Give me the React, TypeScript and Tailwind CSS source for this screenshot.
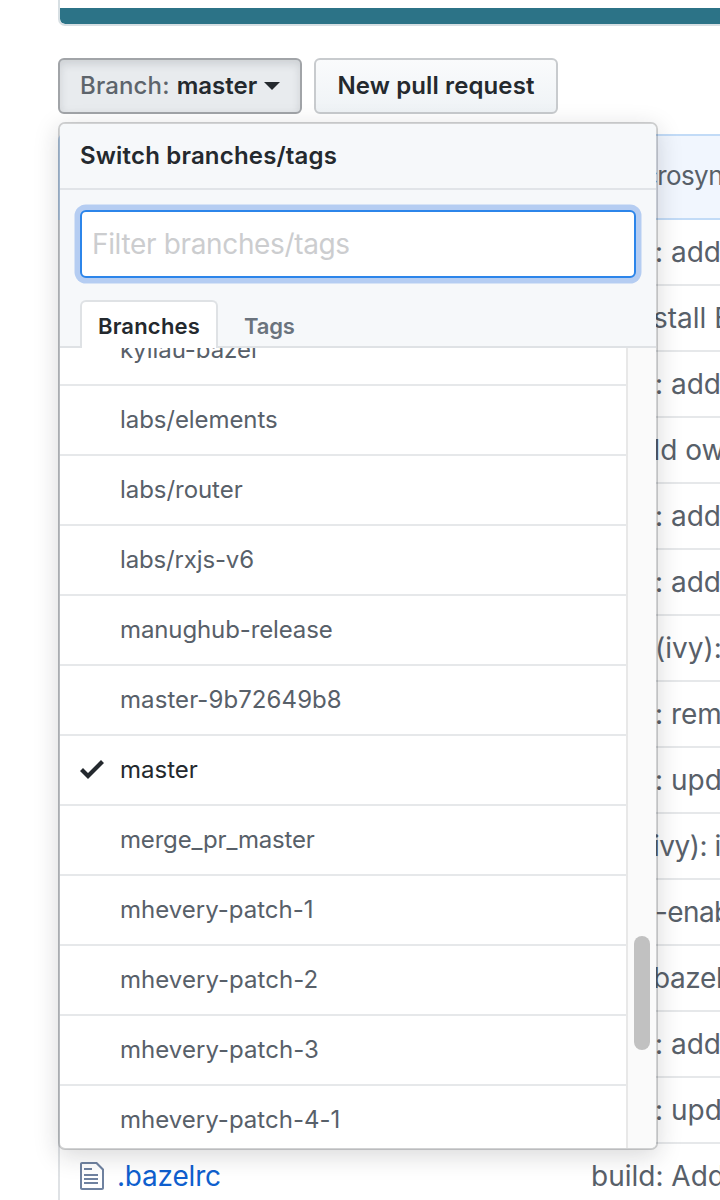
import React from "react";

const branches = [
  { name: "kyliau-bazel", tracking: "tracking-[-0.05px]" },
  { name: "labs/elements", tracking: "tracking-[-0.08px]" },
  { name: "labs/router", tracking: "tracking-[-0.05px]" },
  { name: "labs/rxjs-v6", tracking: "tracking-[-0.15px]" },
  { name: "manughub-release", tracking: "tracking-[-0.12px]" },
  { name: "master-9b72649b8", tracking: "tracking-[0.08px]" },
  { name: "master", tracking: "tracking-normal", selected: true },
  { name: "merge_pr_master", tracking: "tracking-[-0.18px]" },
  { name: "mhevery-patch-1", tracking: "tracking-normal" },
  { name: "mhevery-patch-2", tracking: "tracking-[0.04px]" },
  { name: "mhevery-patch-3", tracking: "tracking-[0.04px]" },
  { name: "mhevery-patch-4-1", tracking: "tracking-[0.02px]" },
];

const commits = [
  { text: ": add", indent: "pl-[595px]" },
  { text: "stall B", indent: "pl-[593px]" },
  { text: ": add", indent: "pl-[595px]" },
  { text: "dd ow", indent: "pl-[583px]" },
  { text: ": add", indent: "pl-[595px]" },
  { text: ": add", indent: "pl-[595px]" },
  { text: "(ivy):", indent: "pl-[595px]" },
  { text: ": rem", indent: "pl-[595px]" },
  { text: ": upd", indent: "pl-[595px]" },
  { text: "ivy): i", indent: "pl-[593px] tracking-[-0.5px]" },
  { text: "-enab", indent: "pl-[595px] tracking-[-0.6px]" },
  { text: "bazel", indent: "pl-[593px] tracking-[-0.4px]" },
  { text: ": add", indent: "pl-[595px]" },
  { text: ": upd", indent: "pl-[595px]" },
];

function CheckIcon() {
  return (
    <svg viewBox="0 0 12 16" className="-mt-[3px] h-8 w-6 shrink-0 fill-[#24292e]" aria-hidden="true">
      <path fillRule="evenodd" d="M12 5l-8 8-4-4 1.5-1.5L4 10l6.5-6.5L12 5z" />
    </svg>
  );
}

function FileIcon() {
  return (
    <svg viewBox="0 0 12 16" className="h-8 w-6 shrink-0 fill-[#6f82a0]" aria-hidden="true">
      <path
        fillRule="evenodd"
        d="M6 5H2V4h4v1zM2 8h7V7H2v1zm0 2h7V9H2v1zm0 2h7v-1H2v1zm10-7.5V14c0 .55-.45 1-1 1H1c-.55 0-1-.45-1-1V2c0-.55.45-1 1-1h7.5L12 4.5zM11 5L8 2H1v12h10V5z"
      />
    </svg>
  );
}

function BranchMenu() {
  return (
    <div className="absolute top-[122px] left-[58px] z-10 flex h-[1028px] w-[600px] flex-col overflow-hidden rounded-[7px] border-2 border-[rgba(27,31,35,0.2)] bg-white bg-clip-padding shadow-[0_6px_24px_rgba(27,31,35,0.17)]">
      <div className="flex h-[66px] shrink-0 items-center border-b-2 border-[#e1e4e8] bg-[#f6f8fa] px-5 pb-px text-2xl font-semibold tracking-[0.18px] text-[#24292e]">
        Switch branches/tags
      </div>
      <div className="flex h-[158px] shrink-0 flex-col justify-between border-b-2 border-[#dfe2e5] bg-[#f6f8fa] px-5 pt-5">
        <div className="flex h-[68px] w-[556px] items-center rounded-[6px] border-2 border-[#2c85ea] bg-white pl-[10px] text-[28px] tracking-[-0.35px] text-[#cccdcf] shadow-[0_0_0_5.5px_#b5cdf2]">
          Filter branches/tags
        </div>
        <div className="-mb-0.5 flex h-12 text-[22px] font-semibold">
          <div className="flex w-[138px] items-center justify-center rounded-t-[6px] border-2 border-b-0 border-[#dfe2e5] bg-white pt-0.5 tracking-[0.2px] text-[#24292e]">
            Branches
          </div>
          <div className="flex items-center pt-1 pl-[26px] tracking-[-0.2px] text-[#6a737d]">Tags</div>
        </div>
      </div>
      <div className="flex min-h-0 flex-1">
        <div className="flex min-w-0 flex-1 flex-col justify-end overflow-hidden">
          {branches.map((b, i) => (
            <div
              key={b.name}
              className={
                "flex h-[70px] shrink-0 items-center pl-5 text-2xl " +
                (i === branches.length - 1 ? "mb-[-8px] " : "") +
                "border-b-2 border-[#e6e8ea] " +
                b.tracking +
                (b.selected ? " text-[#24292e]" : " text-[#586069]")
              }
            >
              <span className="flex w-10">{b.selected && <CheckIcon />}</span>
              <span>{b.name}</span>
            </div>
          ))}
        </div>
        <div className="flex w-[30px] shrink-0 justify-center border-l-2 border-[#e8e8e8] bg-[#fafafa] pt-[588px]">
          <div className="h-[114px] w-4 rounded-full bg-[#c1c1c1]" />
        </div>
      </div>
    </div>
  );
}

export default function App() {
  return (
    <div className="relative h-[1200px] w-[720px] overflow-hidden bg-white pl-[58px] font-['Inter','Liberation_Sans',sans-serif] whitespace-nowrap">
      <div className="h-[26px] overflow-hidden rounded-bl-[7px] border-b-2 border-l-2 border-[#d7dfe3] pt-2">
        <div className="h-4 rounded-bl-[5px] bg-[#2c7387]" />
      </div>

      <div className="mt-8 flex gap-3 text-2xl font-semibold text-[#24292e]">
        <button className="flex h-14 w-[244px] items-center rounded-[6px] border-2 border-[#a1a4a8] bg-[#e8ebee] pl-5 shadow-[inset_0_4px_8px_rgba(27,31,35,0.13)]">
          <span className="font-medium tracking-[0.15px] text-[#5d646b]">Branch:</span>
          <span className="ml-[7px]">master</span>
          <span className="ml-[7px] border-x-8 border-t-8 border-x-transparent border-t-[#24292e]" />
        </button>
        <button className="flex h-14 w-[244px] items-center justify-center rounded-[6px] border-2 border-[#c8cbce] bg-linear-to-b from-[#fafbfc] to-[#eff3f6] tracking-[0.12px]">
          New pull request
        </button>
      </div>

      <div className="mt-5 flex h-[86px] items-center rounded-tl-[6px] border-2 border-r-0 border-[#c2dbf7] bg-[#f1f6fe] pb-[3px] pl-[583px] text-[26px] tracking-[-0.6px] text-[#586069]">
        crosyn
      </div>
      <div className="border-l-2 border-[#dfe2e5] text-[28px] text-[#586069]">
        {commits.map((c, i) => (
          <div key={i} className={"flex h-[66px] items-center border-b-2 border-[#e6e8ea] " + c.indent}>
            {c.text}
          </div>
        ))}
        <div className="flex h-16 items-center pl-5">
          <FileIcon />
          <span className="w-[487px] shrink-0 pl-[13px] tracking-[-0.2px] text-[#0f5fce]">.bazelrc</span>
          <span>build: Add</span>
        </div>
      </div>

      <BranchMenu />
    </div>
  );
}
